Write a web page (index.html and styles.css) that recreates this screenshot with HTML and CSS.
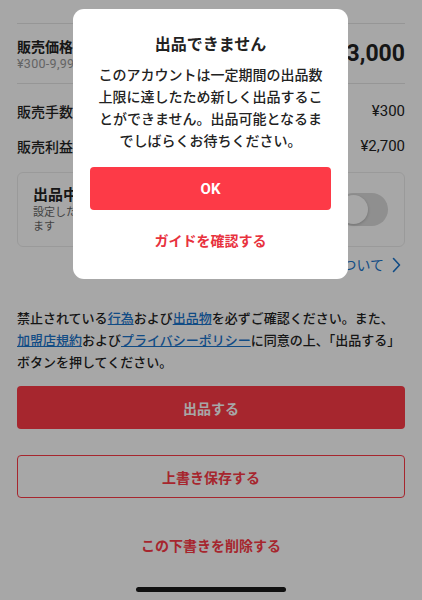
FILE: index.html
```html
<!DOCTYPE html>
<html lang="ja">
<head>
<meta charset="utf-8">
<link rel="stylesheet" href="styles.css">
</head>
<body>
<div class="page">
  <div class="price-row">
    <div class="label-block">
      <div class="label bold">販売価格</div>
      <div class="sub">¥300-9,999,999</div>
    </div>
    <div class="price">¥3,000</div>
  </div>
  <div class="row"><span>販売手数料</span><span class="val">¥300</span></div>
  <div class="row"><span>販売利益</span><span class="val">¥2,700</span></div>
  <div class="card">
    <div class="card-text">
      <div class="card-title">出品中にする</div>
      <div class="card-desc">設定した期間が過ぎると自動的に公開され<br>ます</div>
    </div>
    <div class="toggle"><span class="knob"></span></div>
  </div>
  <div class="help-link">出品の一時停止について
    <svg class="chev" width="9" height="16" viewBox="0 0 9 16"><path d="M1.5 1.5 L7.5 8 L1.5 14.5" fill="none" stroke="currentColor" stroke-width="1.6" stroke-linecap="round" stroke-linejoin="round"/></svg>
  </div>
  <p class="notice">禁止されている<a class="lnk">行為</a>および<a class="lnk">出品物</a>を必ずご確認ください。また、<br><a class="lnk">加盟店規約</a>および<a class="lnk">プライバシーポリシー</a>に同意の上、「出品する」<br>ボタンを押してください。</p>
  <button class="btn primary">出品する</button>
  <button class="btn outline">上書き保存する</button>
  <div class="delete">この下書きを削除する</div>
</div>
<div class="overlay"></div>
<div class="modal">
  <div class="modal-title">出品できません</div>
  <div class="modal-body">このアカウントは一定期間の出品数上限に達したため新しく出品することができません。出品可能となるまでしばらくお待ちください。</div>
  <button class="modal-ok">OK</button>
  <div class="modal-guide">ガイドを確認する</div>
</div>
<div class="home-indicator"></div>
</body>
</html>
```

FILE: styles.css
```css
* { box-sizing: border-box; }
html, body { margin: 0; padding: 0; }
body {
  width: 422px;
  height: 600px;
  overflow: hidden;
  background: #fff;
  color: #222;
  font-family: "Roboto", "Noto Sans CJK JP", sans-serif;
}
.page {
  padding: 23px 17px 0;
}
.price-row {
  border-top: 1px solid #e6e6e6;
  border-bottom: 1px solid #e6e6e6;
  height: 61px;
  display: flex;
  align-items: center;
  justify-content: space-between;
  padding-top: 1px;
}
.label { font-size: 14px; line-height: 20px; }
.bold { font-weight: 700; }
.sub { font-size: 12.5px; line-height: 14px; color: #999; letter-spacing: 0.3px; }
.price { font-size: 23px; font-weight: 700; line-height: 30px; }
.row {
  display: flex;
  justify-content: space-between;
  align-items: center;
  height: 35px;
  font-size: 14px;
  font-weight: 500;
}
.price-row + .row { margin-top: 9px; }
.val { font-size: 15px; font-weight: 400; }
.card {
  margin-top: 9px;
  border: 1px solid #ececec;
  border-radius: 6px;
  padding: 11px 16px 12px 15px;
  display: flex;
  align-items: center;
  justify-content: space-between;
}
.card-title { font-size: 15px; font-weight: 700; line-height: 22px; }
.card-desc { font-size: 11px; line-height: 14px; color: #666; }
.toggle {
  width: 51px;
  height: 33px;
  border-radius: 17px;
  background: #dadada;
  position: relative;
  flex: none;
}
.knob {
  position: absolute;
  left: 2px;
  top: 2px;
  width: 29px;
  height: 29px;
  border-radius: 50%;
  background: #fff;
  box-shadow: 0 1px 3px rgba(0,0,0,0.2);
}
.help-link {
  margin-top: 8px;
  display: flex;
  justify-content: flex-end;
  align-items: center;
  gap: 8px;
  font-size: 14px;
  line-height: 20px;
  color: #1a74cc;
  padding-right: 4px;
}
.notice {
  margin: 33px 0 0;
  font-size: 13px;
  line-height: 22px;
  font-weight: 500;
  white-space: nowrap;
}
.lnk { color: #1a74cc; text-decoration: underline; }
.btn {
  display: block;
  width: 100%;
  height: 43px;
  border-radius: 4px;
  font-family: inherit;
  font-size: 14px;
  font-weight: 700;
}
.primary {
  margin-top: 12px;
  background: #fd3a47;
  color: #fff;
  border: none;
}
.outline {
  margin-top: 26px;
  background: #fff;
  color: #fd3a47;
  border: 1px solid #fd3a47;
}
.delete {
  margin-top: 38px;
  text-align: center;
  font-size: 14px;
  line-height: 20px;
  font-weight: 700;
  color: #fd3a47;
}
.overlay {
  position: fixed;
  inset: 0;
  background: rgba(0,0,0,0.345);
}
.modal {
  position: fixed;
  left: 73px;
  top: 9px;
  width: 275px;
  height: 270px;
  background: #fff;
  border-radius: 11px;
  padding: 24px 17px 0;
  text-align: center;
}
.modal-title {
  font-size: 16px;
  font-weight: 700;
  line-height: 24px;
}
.modal-body {
  margin-top: 7px;
  padding: 0 5px;
  font-size: 14px;
  line-height: 22px;
  font-weight: 500;
}
.modal-ok {
  display: block;
  margin-top: 15px;
  width: 100%;
  height: 43px;
  border: none;
  border-radius: 4px;
  background: #fd3a47;
  color: #fff;
  font-family: inherit;
  font-size: 15px;
  font-weight: 700;
}
.modal-guide {
  margin-top: 21px;
  font-size: 14px;
  line-height: 20px;
  font-weight: 700;
  color: #e8323e;
}
.home-indicator {
  position: fixed;
  left: 136px;
  top: 587px;
  width: 150px;
  height: 5px;
  border-radius: 3px;
  background: #111;
}
```
